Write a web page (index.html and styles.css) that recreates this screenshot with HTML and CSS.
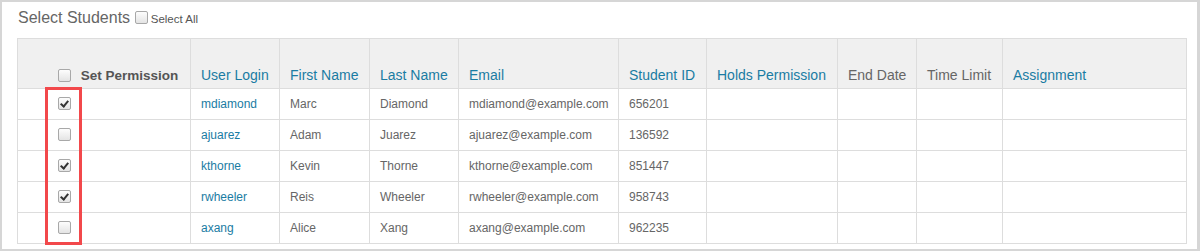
FILE: index.html
```html
<!DOCTYPE html>
<html lang="en">
<head>
    <meta charset="UTF-8">
    <title>Select Students</title>
    <link rel="stylesheet" href="styles.css">
</head>
<body>
    <div class="frame">
        <div class="title">
            Select Students
            <label class="select-all"><input type="checkbox" class="box"> Select All</label>
        </div>
        <div class="table-wrap">
            <table>
                <colgroup>
                    <col style="width:173px">
                    <col style="width:89px">
                    <col style="width:90px">
                    <col style="width:89px">
                    <col style="width:160px">
                    <col style="width:88px">
                    <col style="width:131px">
                    <col style="width:79px">
                    <col style="width:86px">
                    <col style="width:184px">
                </colgroup>
                <thead>
                    <tr>
                        <th class="perm"><input type="checkbox" class="box"> Set Permission</th>
                        <th><a href="#">User Login</a></th>
                        <th><a href="#">First Name</a></th>
                        <th><a href="#">Last Name</a></th>
                        <th><a href="#">Email</a></th>
                        <th><a href="#">Student ID</a></th>
                        <th><a href="#">Holds Permission</a></th>
                        <th>End Date</th>
                        <th>Time Limit</th>
                        <th><a href="#">Assignment</a></th>
                    </tr>
                </thead>
                <tbody>
                    <tr>
                        <td class="perm"><input type="checkbox" class="box" checked></td>
                        <td><a href="#">mdiamond</a></td>
                        <td>Marc</td>
                        <td>Diamond</td>
                        <td>mdiamond@example.com</td>
                        <td>656201</td>
                        <td></td><td></td><td></td><td></td>
                    </tr>
                    <tr>
                        <td class="perm"><input type="checkbox" class="box"></td>
                        <td><a href="#">ajuarez</a></td>
                        <td>Adam</td>
                        <td>Juarez</td>
                        <td>ajuarez@example.com</td>
                        <td>136592</td>
                        <td></td><td></td><td></td><td></td>
                    </tr>
                    <tr>
                        <td class="perm"><input type="checkbox" class="box" checked></td>
                        <td><a href="#">kthorne</a></td>
                        <td>Kevin</td>
                        <td>Thorne</td>
                        <td>kthorne@example.com</td>
                        <td>851447</td>
                        <td></td><td></td><td></td><td></td>
                    </tr>
                    <tr>
                        <td class="perm"><input type="checkbox" class="box" checked></td>
                        <td><a href="#">rwheeler</a></td>
                        <td>Reis</td>
                        <td>Wheeler</td>
                        <td>rwheeler@example.com</td>
                        <td>958743</td>
                        <td></td><td></td><td></td><td></td>
                    </tr>
                    <tr>
                        <td class="perm"><input type="checkbox" class="box"></td>
                        <td><a href="#">axang</a></td>
                        <td>Alice</td>
                        <td>Xang</td>
                        <td>axang@example.com</td>
                        <td>962235</td>
                        <td></td><td></td><td></td><td></td>
                    </tr>
                </tbody>
            </table>
            <div class="highlight"></div>
        </div>
    </div>
</body>
</html>
```

FILE: styles.css
```css
body {
    margin: 0;
    font-family: "Liberation Sans", Arial, sans-serif;
    background: #fff;
}
.frame {
    box-sizing: border-box;
    height: 251px;
    border: 2px solid #d6d6d6;
    border-right-width: 3px;
    padding: 5px 11px 0 15px;
    overflow: hidden;
}
.title {
    height: 22px;
    line-height: 22px;
    margin-bottom: 9px;
    font-size: 16px;
    color: #666;
    padding-left: 1px;
}
.select-all {
    font-size: 11.5px;
    color: #555;
}
.select-all .box {
    margin: 0 0 0 0;
    vertical-align: -1px;
}
.table-wrap {
    position: relative;
}
table {
    table-layout: fixed;
    width: 1169px;
    border-collapse: collapse;
    font-size: 12px;
    color: #666;
}
th, td {
    border: 1px solid #ddd;
    padding: 0 10px;
    text-align: left;
    white-space: nowrap;
}
th {
    height: 44px;
    background: #f0f0f0;
    font-size: 14px;
    font-weight: normal;
    color: #666;
    vertical-align: bottom;
    padding-bottom: 5px;
}
td {
    height: 30px;
}
a {
    color: #1a7ca3;
    text-decoration: none;
}
th.perm {
    font-weight: bold;
    font-size: 13.5px;
    color: #555;
    padding-left: 36px;
}
td.perm {
    padding-left: 36px;
}
.box {
    appearance: none;
    position: relative;
    width: 13px;
    height: 13px;
    margin: 0 4px 0 4px;
    border: 1px solid #a8a8a8;
    border-radius: 2px;
    background: linear-gradient(#fdfdfd, #e4e4e4);
    vertical-align: -2px;
    box-sizing: border-box;
}
.box:checked::after {
    content: "";
    position: absolute;
    left: 3px;
    top: 1px;
    width: 3px;
    height: 6px;
    border: solid #333;
    border-width: 0 2px 2px 0;
    transform: rotate(40deg);
}
th.perm .box {
    margin-right: 6px;
}
.highlight {
    position: absolute;
    left: 28px;
    top: 49px;
    width: 31px;
    height: 152px;
    border: 3px solid #f2484b;
    pointer-events: none;
}
```
